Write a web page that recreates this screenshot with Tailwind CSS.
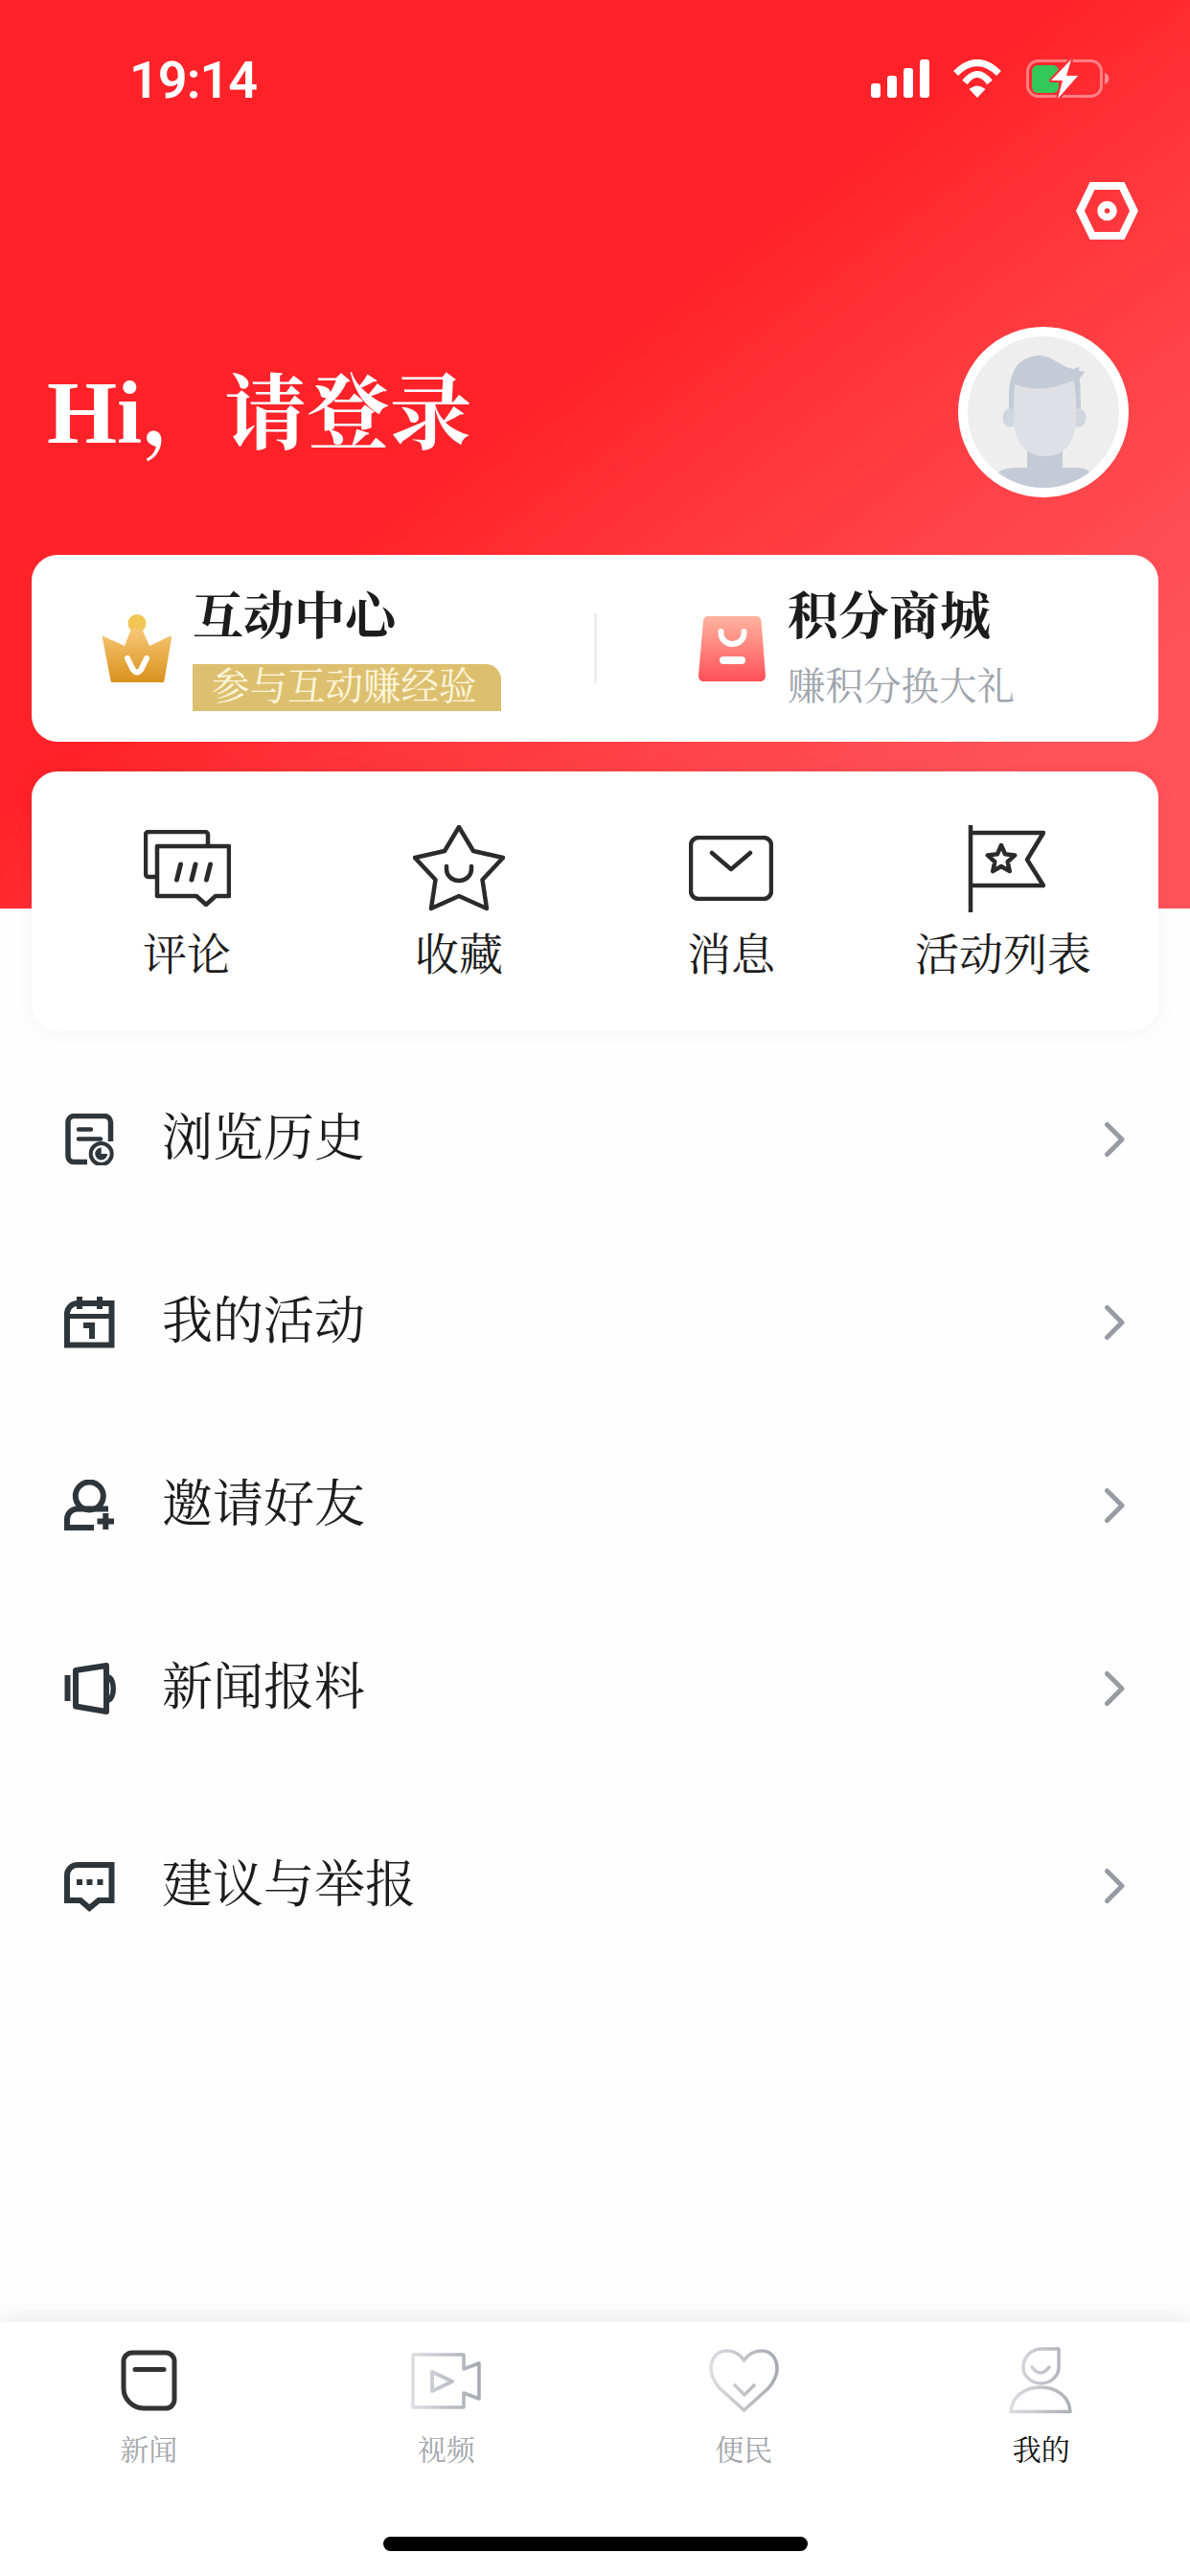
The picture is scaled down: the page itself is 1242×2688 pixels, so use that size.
<!DOCTYPE html>
<html lang="zh-CN">

<head>
    <meta charset="UTF-8">
    <meta name="viewport" content="width=device-width, initial-scale=1.0">
    <title>我的</title>
    <script src="https://cdn.jsdelivr.net/npm/@tailwindcss/browser@4"></script>
</head>

<body class="bg-white">
    <div class="relative w-[1242px] h-[2688px] overflow-hidden flex flex-col bg-[#fefefe] text-[#1c1c1c] font-['Liberation_Serif','Noto_Serif_CJK_SC','Noto_Sans_CJK_SC',serif]">
        <!-- Red header background -->
        <div class="absolute top-0 left-0 w-full h-[948px] bg-linear-to-br from-[#ff2229] from-45% to-[#ff5259] to-85%"></div>

        <!-- Status bar -->
        <div class="relative flex items-center justify-between h-[40px] mt-[62px] pl-[135px] pr-[84px]">
            <span class="pt-[3px] font-['Roboto',sans-serif] font-semibold text-[54px] tracking-[-1px] leading-none text-white">19:14</span>
            <div class="flex items-center">
                <div class="flex items-end gap-[7px] h-[40px]">
                    <div class="w-[10px] h-[15px] rounded-[3px] bg-white"></div>
                    <div class="w-[10px] h-[23px] rounded-[3px] bg-white"></div>
                    <div class="w-[10px] h-[31px] rounded-[3px] bg-white"></div>
                    <div class="w-[10px] h-[40px] rounded-[3px] bg-white"></div>
                </div>
                <svg class="ml-[23px]" width="54" height="40" viewBox="0 0 54 40">
                    <path d="M4.5 14.5Q27 -7.5 49.5 14.5" fill="none" stroke="#fff" stroke-width="7" />
                    <path d="M14 24Q27 7 40 24" fill="none" stroke="#fff" stroke-width="7" />
                    <path d="M18.5 31Q27 24 35.5 31L27 40Z" fill="#fff" />
                </svg>
                <svg class="ml-[24px] overflow-visible" width="87" height="40" viewBox="0 0 87 40">
                    <rect x="1.5" y="1.5" width="77" height="37" rx="11" fill="none" stroke="#fff" stroke-opacity="0.4" stroke-width="3" />
                    <path d="M82 14c3 1 4.5 3.5 4.5 6s-1.5 5-4.5 6Z" fill="#fff" fill-opacity="0.45" />
                    <rect x="6" y="6" width="28" height="29" rx="6" fill="#34c759" />
                    <path d="M47 0L26 22H38L33 41L54 17H42Z" fill="#fff" stroke="#ff2f37" stroke-width="4" paint-order="stroke" stroke-linejoin="round" />
                </svg>
            </div>
        </div>

        <!-- Settings -->
        <div class="relative flex justify-end mt-[88px] pr-[54px]">
            <svg width="65" height="60" viewBox="0 0 65 60">
                <path d="M17 4H48L60.5 30L48 56H17L4.5 30Z" fill="none" stroke="#fff" stroke-width="8" />
                <circle cx="32.5" cy="30" r="6.5" fill="none" stroke="#fff" stroke-width="7.5" />
            </svg>
        </div>

        <!-- Greeting -->
        <div class="relative flex items-center justify-between mt-[91px] pl-[49px] pr-[64px]">
            <h1 class="text-[86px] leading-none font-bold text-white"><span class="text-[94px]">Hi</span>，请登录</h1>
            <div class="w-[178px] h-[178px] rounded-full border-[10px] border-white bg-[#eeeeee] overflow-hidden">
                <svg width="158" height="158" viewBox="0 0 158 158">
                    <path d="M43 62C43 48 46 38 50 35H115C117 42 118 50 118 85H43Z" fill="#c5cbd6" />
                    <ellipse cx="44" cy="85" rx="7.5" ry="10" fill="#d0d6e0" />
                    <ellipse cx="116" cy="85" rx="7.5" ry="10" fill="#d0d6e0" />
                    <path d="M62 110H99V137C112 137 122 136 127 141V158H32V142C40 136 50 137 62 137Z" fill="#c5cbd6" />
                    <path d="M49 50C70 58 95 55 110 44C113 55 113.5 70 113 85C113 112 100 125 81 125C62 125 48 112 48 85C48 72 48 60 49 50Z" fill="#dee0e5" />
                    <path d="M47 41C48 30 60 20 75 20C88 20 100 33 110 34L117 32L116 36L122 37C120 41 117 44 113 45C100 50 90 53 80 52C68 51 55 47 47 41Z" fill="#c5cbd6" />
                </svg>
            </div>
        </div>

        <!-- Interaction / points card -->
        <div class="relative flex items-center h-[195px] mx-[33px] mt-[60px] rounded-[27px] bg-white">
            <div class="flex items-center w-[587px] pl-[73px] gap-[22px]">
                <svg width="73" height="71" viewBox="0 0 73 71">
                    <defs>
                        <linearGradient id="crown" x1="0" y1="0" x2="0" y2="1">
                            <stop offset="0" stop-color="#f8c878" />
                            <stop offset="1" stop-color="#d8921c" />
                        </linearGradient>
                        <linearGradient id="bag" x1="0" y1="0" x2="0" y2="1">
                            <stop offset="0" stop-color="#ffb4a0" />
                            <stop offset="1" stop-color="#ff5058" />
                        </linearGradient>
                    </defs>
                    <circle cx="37" cy="9.5" r="9.5" fill="#f2c654" />
                    <path d="M2 23L24 33L31 15H42L50 33L71 23C72.5 22.5 73 23 73 25L65.5 69C65.5 70.5 64.5 71 63 71H12C10.5 71 9.5 70.5 9.5 69L1 25C1 23 1 22.5 2 23Z" fill="url(#crown)" />
                    <path d="M27 46L33 58Q37 63 41 58L47 46" fill="none" stroke="#fff" stroke-width="6" stroke-linecap="round" />
                </svg>
                <div class="flex flex-col items-start">
                    <div class="h-[60px] text-[53px] leading-[64px] font-bold text-[#1c1c1c]">互动中心</div>
                    <div class="h-[49px] mt-[21px] pl-[20px] pr-[25px] text-[39.5px] leading-[49px] text-[#fff6dc] bg-[#dcc070] rounded-tr-[16px]">参与互动赚经验</div>
                </div>
            </div>
            <div class="w-[3px] h-[73px] bg-[#eeeeee]"></div>
            <div class="flex items-center pl-[106px] gap-[23px]">
                <svg width="70" height="68" viewBox="0 0 70 68">
                    <path d="M10 0H61C63.5 0 65.5 2 65.5 5L70 62C70 65.5 68 68 65 68H5C2 68 0 65.5 0 62L5 5C5 2 7 0 10 0Z" fill="url(#bag)" />
                    <path d="M23.5 16V18A12 11 0 0 0 47.5 18V16" fill="none" stroke="#fff" stroke-width="6" stroke-linecap="round" />
                    <rect x="22" y="42" width="27" height="8" rx="4" fill="#fff" />
                </svg>
                <div class="flex flex-col items-start">
                    <div class="h-[60px] text-[53px] leading-[64px] font-bold text-[#1c1c1c]">积分商城</div>
                    <div class="h-[49px] mt-[21px] text-[39.5px] leading-[49px] text-[#a0a5ad]">赚积分换大礼</div>
                </div>
            </div>
        </div>

        <!-- Shortcut card -->
        <div class="relative grid grid-cols-4 h-[271px] mx-[33px] mt-[31px] px-[20px] pt-[53px] rounded-[27px] bg-white shadow-[0_0_20px_rgba(0,0,0,0.05)]">
            <div class="flex flex-col items-center">
                <div class="flex items-center justify-center h-[96px]">
                    <svg width="91" height="80" viewBox="0 0 91 80" fill="none" stroke="#2b2b2b" stroke-width="4.5" stroke-linejoin="round">
                        <path d="M13 49H5a3 3 0 0 1-3-3V5a3 3 0 0 1 3-3h59a3 3 0 0 1 3 3v12" />
                        <path d="M14 17H89V69H75L65 78L55 69H14Z" />
                        <path d="M38.5 36L34.5 52M54 36L50 52M69.5 36L65.5 52" stroke-width="5" stroke-linecap="round" />
                    </svg>
                </div>
                <span class="mt-[17px] text-[46px] leading-[52px]">评论</span>
            </div>
            <div class="flex flex-col items-center">
                <div class="flex items-center justify-center h-[96px]">
                    <svg width="96" height="90" viewBox="0 0 96 90" fill="none" stroke="#2b2b2b" stroke-width="4.5" stroke-linejoin="round">
                        <path d="M48 2L63 27L94 34L72.5 57L77 87L48 74L19 87L23.5 57L2 34L33 27Z" />
                        <path d="M35 43V46A13 12 0 0 0 61 46V43" stroke-linecap="round" />
                    </svg>
                </div>
                <span class="mt-[17px] text-[46px] leading-[52px]">收藏</span>
            </div>
            <div class="flex flex-col items-center">
                <div class="flex items-center justify-center h-[96px]">
                    <svg width="88" height="68" viewBox="0 0 88 68" fill="none" stroke="#2b2b2b" stroke-width="4.5" stroke-linejoin="round">
                        <rect x="2" y="2" width="84" height="64" rx="8" />
                        <path d="M24 18L44 35L64 18" stroke-linecap="round" />
                    </svg>
                </div>
                <span class="mt-[17px] text-[46px] leading-[52px]">消息</span>
            </div>
            <div class="flex flex-col items-center">
                <div class="flex items-center justify-center h-[96px] ml-[6px]">
                    <svg width="81" height="91" viewBox="0 0 81 91" fill="none" stroke="#2b2b2b" stroke-width="4.5" stroke-linejoin="round">
                        <path d="M3 1V90" stroke-linecap="round" />
                        <path d="M3 8H79L62 36L79 63H3" />
                        <path d="M35 21L39.1 30.3L49.3 31.4L41.7 38.2L43.8 48.1L35 43L26.2 48.1L28.3 38.2L20.7 31.4L30.9 30.3Z" />
                    </svg>
                </div>
                <span class="mt-[17px] text-[46px] leading-[52px]">活动列表</span>
            </div>
        </div>

        <!-- Menu list -->
        <div class="relative flex flex-col mt-[17px] pl-[67px] pr-[66px]">
            <div class="flex items-center h-[191px]">
                <svg width="54" height="54" viewBox="0 0 54 54" fill="none" stroke="#2f363b" stroke-width="5.5">
                    <path d="M24 50.5H10a6 6 0 0 1-6-6V9a6.5 6.5 0 0 1 6-6.5H42a6.5 6.5 0 0 1 6.5 6.5V29" />
                    <path d="M15 16.5H28M15 26.5H38" stroke-width="4.5" stroke-linecap="round" />
                    <circle cx="38.7" cy="42" r="11" stroke-width="4" />
                    <path d="M38.7 42V35.5A6.5 6.5 0 1 0 45.2 42Z" fill="#2f363b" stroke="none" />
                </svg>
                <span class="ml-[48px] text-[53px] leading-none">浏览历史</span>
                <svg class="ml-auto" width="25" height="38" viewBox="0 0 25 38" fill="none" stroke="#979ba2" stroke-width="5" stroke-linecap="round" stroke-linejoin="round">
                    <path d="M4.5 3.5L20 19L4.5 34.5" />
                </svg>
            </div>
            <div class="flex items-center h-[191px]">
                <svg width="54" height="54" viewBox="0 0 54 54" fill="#2f363b" stroke="none">
                    <path d="M3 50.5V17a11 11 0 0 1 11-10H49.5V50.5Z" fill="none" stroke="#2f363b" stroke-width="6" />
                    <path d="M3 20.5H49" fill="none" stroke="#2f363b" stroke-width="5" />
                    <rect x="13" y="0" width="6" height="13" />
                    <rect x="34" y="0" width="6" height="13" />
                    <path d="M20 27H32V44H26V33H20Z" />
                </svg>
                <span class="ml-[48px] text-[53px] leading-none">我的活动</span>
                <svg class="ml-auto" width="25" height="38" viewBox="0 0 25 38" fill="none" stroke="#979ba2" stroke-width="5" stroke-linecap="round" stroke-linejoin="round">
                    <path d="M4.5 3.5L20 19L4.5 34.5" />
                </svg>
            </div>
            <div class="flex items-center h-[191px]">
                <svg width="54" height="54" viewBox="0 0 54 54" fill="none" stroke="#2f363b" stroke-width="6">
                    <circle cx="26.3" cy="17" r="14.5" />
                    <path d="M46 30.5H14a11 11 0 0 0-11 11V50H31" />
                    <path d="M34.5 43.5H52M43.3 35V52" />
                </svg>
                <span class="ml-[48px] text-[53px] leading-none">邀请好友</span>
                <svg class="ml-auto" width="25" height="38" viewBox="0 0 25 38" fill="none" stroke="#979ba2" stroke-width="5" stroke-linecap="round" stroke-linejoin="round">
                    <path d="M4.5 3.5L20 19L4.5 34.5" />
                </svg>
            </div>
            <div class="flex items-center h-[191px]">
                <svg width="54" height="54" viewBox="0 0 54 54" fill="none" stroke="#2f363b" stroke-width="6">
                    <rect x="0.5" y="13" width="6" height="27" fill="#2f363b" stroke="none" />
                    <path d="M12 8L44 3V51L12 45.5Z" stroke-linejoin="round" />
                    <path d="M46 15C53 17 53 37 46 39" stroke-width="5.5" />
                </svg>
                <span class="ml-[48px] text-[53px] leading-none">新闻报料</span>
                <svg class="ml-auto" width="25" height="38" viewBox="0 0 25 38" fill="none" stroke="#979ba2" stroke-width="5" stroke-linecap="round" stroke-linejoin="round">
                    <path d="M4.5 3.5L20 19L4.5 34.5" />
                </svg>
            </div>
            <div class="flex items-center h-[191px] mt-[15px]">
                <svg width="54" height="54" viewBox="0 0 54 54" fill="none" stroke="#2f363b" stroke-width="6">
                    <path d="M49.5 5H14A11 11 0 0 0 3 16V42H17L26.3 50L36 42H49.5Z" />
                    <rect x="13" y="20" width="6" height="6" fill="#2f363b" stroke="none" />
                    <rect x="23.5" y="20" width="6" height="6" fill="#2f363b" stroke="none" />
                    <rect x="34.5" y="20" width="6" height="6" fill="#2f363b" stroke="none" />
                </svg>
                <span class="ml-[48px] text-[53px] leading-none">建议与举报</span>
                <svg class="ml-auto" width="25" height="38" viewBox="0 0 25 38" fill="none" stroke="#979ba2" stroke-width="5" stroke-linecap="round" stroke-linejoin="round">
                    <path d="M4.5 3.5L20 19L4.5 34.5" />
                </svg>
            </div>
        </div>

        <!-- Tab bar -->
        <div class="relative mt-auto h-[265px] pt-[25px] bg-white shadow-[0_-6px_20px_rgba(0,0,0,0.07)]">
            <div class="grid grid-cols-4">
                <div class="flex flex-col items-center">
                    <div class="flex items-center justify-center h-[72px]">
                        <svg width="59" height="64" viewBox="0 0 59 64" fill="none" stroke="#333333" stroke-width="5">
                            <path d="M12 3H47a9 9 0 0 1 9 9V52a9 9 0 0 1-9 9H24A21 21 0 0 1 3 40V12a9 9 0 0 1 9-9Z" />
                            <path d="M15 20.5H45" stroke-linecap="round" />
                        </svg>
                    </div>
                    <span class="mt-[17px] text-[30px] leading-[40px] text-[#a3a6ab]">新闻</span>
                </div>
                <div class="flex flex-col items-center">
                    <div class="flex items-center justify-center h-[72px]">
                        <svg width="73" height="59" viewBox="0 0 73 59" fill="none" stroke="url(#tabline)" stroke-width="3.5" stroke-linejoin="round">
                            <defs>
                                <linearGradient id="tabline" gradientUnits="userSpaceOnUse" x1="0" y1="0" x2="73" y2="0">
                                    <stop offset="0" stop-color="#dcdee2" />
                                    <stop offset="1" stop-color="#a4a9b0" />
                                </linearGradient>
                            </defs>
                            <path d="M2 2H55V17L71 11V48L55 42V57H2Z" />
                            <path d="M22 20V40L43 30Z" stroke-width="4" />
                        </svg>
                    </div>
                    <span class="mt-[17px] text-[30px] leading-[40px] text-[#a3a6ab]">视频</span>
                </div>
                <div class="flex flex-col items-center">
                    <div class="flex items-center justify-center h-[72px]">
                        <svg width="73" height="66" viewBox="0 0 73 66" fill="none" stroke="url(#tabline)" stroke-width="3.5" stroke-linejoin="round">
                            <path d="M36.5 12C31 4 24 2 18 2C8 2 2 10 2 21C2 29 6 35 11 41L36.5 64L62 41C67 35 71 29 71 21C71 10 65 2 55 2C49 2 42 4 36.5 12Z" />
                            <path d="M26 37L37 48L48 37" />
                        </svg>
                    </div>
                    <span class="mt-[17px] text-[30px] leading-[40px] text-[#a3a6ab]">便民</span>
                </div>
                <div class="flex flex-col items-center">
                    <div class="flex items-center justify-center h-[72px]">
                        <svg width="67" height="70" viewBox="0 0 67 70" fill="none" stroke="url(#tabline)" stroke-width="3.5" stroke-linejoin="round">
                            <path d="M52 2H34A19 19 0 0 0 15 21A18.5 17 0 0 0 52 21Z" />
                            <path d="M24 21Q33 33 42 21" stroke-linecap="round" />
                            <path d="M2 67.5C3 52 16 42 33 42S63 52 64 67.5Z" />
                        </svg>
                    </div>
                    <span class="mt-[17px] text-[30px] leading-[40px] text-[#111111]">我的</span>
                </div>
            </div>
            <div class="w-[443px] h-[15px] mt-[70px] mx-auto rounded-full bg-black"></div>
        </div>
    </div>
</body>

</html>
